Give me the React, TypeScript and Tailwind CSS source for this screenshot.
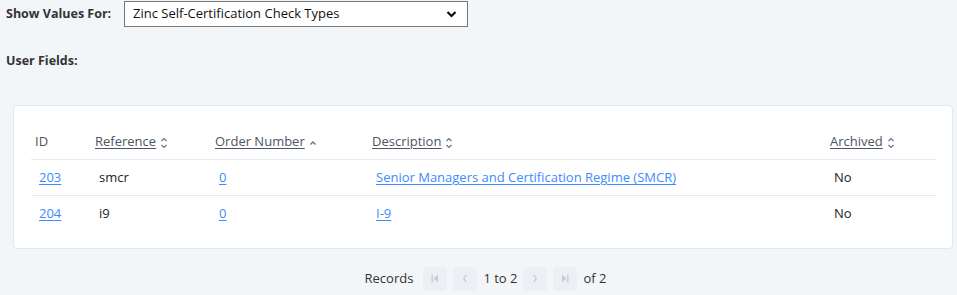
import React from 'react';

const font = { fontFamily: '"Open Sans", "Liberation Sans", sans-serif' };

const SortBoth = () => (
  <svg width="8" height="12" viewBox="0 0 8 12" className="ml-1 inline-block text-slate-500" fill="none" stroke="currentColor" strokeWidth="1.2">
    <path d="M1.5 4 L4 1.5 L6.5 4" />
    <path d="M1.5 8 L4 10.5 L6.5 8" />
  </svg>
);

const SortUp = () => (
  <svg width="8" height="12" viewBox="0 0 8 12" className="ml-1 inline-block text-slate-500" fill="none" stroke="currentColor" strokeWidth="1.3">
    <path d="M1.5 7.5 L4 5 L6.5 7.5" />
  </svg>
);

const rows = [
  { id: '203', ref: 'smcr', order: '0', desc: 'Senior Managers and Certification Regime (SMCR)', archived: 'No' },
  { id: '204', ref: 'i9', order: '0', desc: 'I-9', archived: 'No' },
];

const PageBtn = ({ children }: { children: React.ReactNode }) => (
  <button className="w-6 h-6 rounded bg-[#eceff3] text-[#c8cdd4] flex items-center justify-center">{children}</button>
);

export default function App() {
  return (
    <div className="w-[957px] h-[295px] bg-[#f3f6f9] text-[#222] overflow-hidden" style={font}>
      <div className="flex items-center pt-px pl-1.5">
        <span className="text-[12.5px] font-bold text-[#333] w-[118px]">Show Values For:</span>
        <div className="w-[344px] h-[26px] bg-white border border-[#767676] flex items-center justify-between pl-2 pr-2.5">
          <span className="text-[13px] text-[#111]">Zinc Self-Certification Check Types</span>
          <svg width="11" height="8" viewBox="0 0 11 8" fill="none" stroke="#111" strokeWidth="2.2">
            <path d="M1.5 2 L5.5 6 L9.5 2" />
          </svg>
        </div>
      </div>
      <div className="pl-1.5 mt-[25px] text-[12.5px] font-bold text-[#333]">User Fields:</div>
      <div className="mx-[13px] mt-[34px] w-[940px] bg-white border border-[#e3e7eb] rounded pt-[19px] pb-[16px] pl-[17px] pr-[16px]">
        <table className="w-[905px] table-fixed border-collapse text-[13px]">
          <colgroup>
            <col className="w-[60px]" />
            <col className="w-[120px]" />
            <col className="w-[157px]" />
            <col className="w-[458px]" />
            <col className="w-[110px]" />
          </colgroup>
          <thead>
            <tr className="h-[35px] border-b border-[#e6e9ed] text-left text-[#4b5563]">
              <th className="font-normal pl-1">ID</th>
              <th className="font-normal pl-1"><span className="underline underline-offset-2">Reference</span><SortBoth /></th>
              <th className="font-normal pl-1"><span className="underline underline-offset-2">Order Number</span><SortUp /></th>
              <th className="font-normal pl-1"><span className="underline underline-offset-2">Description</span><SortBoth /></th>
              <th className="font-normal pl-1"><span className="underline underline-offset-2">Archived</span><SortBoth /></th>
            </tr>
          </thead>
          <tbody>
            {rows.map((r, i) => (
              <tr key={r.id} className={`h-9 ${i < rows.length - 1 ? 'border-b border-[#e6e9ed]' : ''}`}>
                <td className="pl-2"><a className="text-[#3d8bfd] underline underline-offset-2">{r.id}</a></td>
                <td className="pl-2">{r.ref}</td>
                <td className="pl-2"><a className="text-[#3d8bfd] underline underline-offset-2">{r.order}</a></td>
                <td className="pl-2"><a className="text-[#3d8bfd] underline underline-offset-2">{r.desc}</a></td>
                <td className="pl-2">{r.archived}</td>
              </tr>
            ))}
          </tbody>
        </table>
      </div>
      <div className="flex items-center justify-center gap-[6px] mt-[18px] text-[13px] text-[#333] pl-[14px]">
        <span className="mr-1">Records</span>
        <PageBtn>
          <svg width="8" height="9" viewBox="0 0 8 9" fill="currentColor"><rect x="0.5" y="0.5" width="1.4" height="8" /><path d="M7 0.5 L2.5 4.5 L7 8.5 Z" /></svg>
        </PageBtn>
        <PageBtn>
          <svg width="6" height="9" viewBox="0 0 6 9" fill="none" stroke="currentColor" strokeWidth="1.2"><path d="M4.5 1 L1.5 4.5 L4.5 8" /></svg>
        </PageBtn>
        <span>1 to 2</span>
        <PageBtn>
          <svg width="6" height="9" viewBox="0 0 6 9" fill="none" stroke="currentColor" strokeWidth="1.2"><path d="M1.5 1 L4.5 4.5 L1.5 8" /></svg>
        </PageBtn>
        <PageBtn>
          <svg width="8" height="9" viewBox="0 0 8 9" fill="currentColor"><path d="M1 0.5 L5.5 4.5 L1 8.5 Z" /><rect x="6.1" y="0.5" width="1.4" height="8" /></svg>
        </PageBtn>
        <span>of 2</span>
      </div>
    </div>
  );
}
